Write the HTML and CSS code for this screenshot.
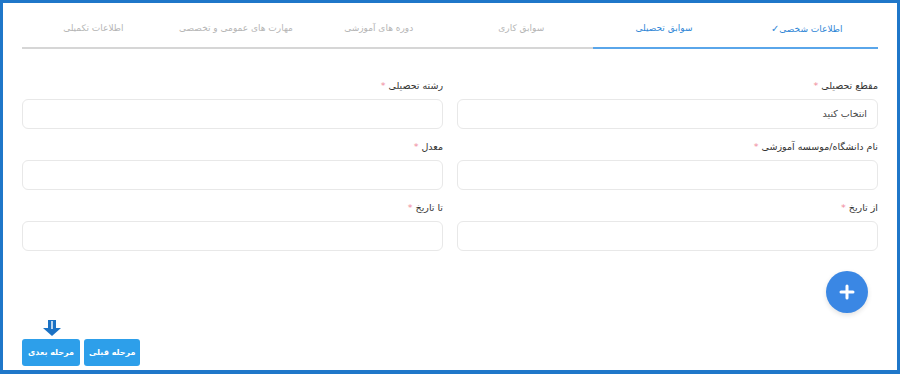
FILE: index.html
```html
<!DOCTYPE html>
<html lang="fa" dir="rtl">
<head>
    <meta charset="UTF-8">
    <title>سوابق تحصیلی</title>
    <link rel="stylesheet" href="styles.css">
</head>
<body>

    <div class="frame">
        <!-- مراحل فرم -->
        <ul class="steps">
            <li class="step done">اطلاعات شخصی<span class="check">✓</span></li>
            <li class="step active">سوابق تحصیلی</li>
            <li class="step">سوابق کاری</li>
            <li class="step">دوره های آموزشی</li>
            <li class="step">مهارت های عمومی و تخصصی</li>
            <li class="step">اطلاعات تکمیلی</li>
        </ul>

        <form class="fields">
            <div class="field">
                <label>مقطع تحصیلی <span class="req">*</span></label>
                <div class="input select">انتخاب کنید</div>
            </div>
            <div class="field">
                <label>رشته تحصیلی <span class="req">*</span></label>
                <div class="input"></div>
            </div>
            <div class="field">
                <label>نام دانشگاه/موسسه آموزشی <span class="req">*</span></label>
                <div class="input"></div>
            </div>
            <div class="field">
                <label>معدل <span class="req">*</span></label>
                <div class="input"></div>
            </div>
            <div class="field">
                <label>از تاریخ <span class="req">*</span></label>
                <div class="input"></div>
            </div>
            <div class="field">
                <label>تا تاریخ <span class="req">*</span></label>
                <div class="input"></div>
            </div>
        </form>

        <div class="add-row">
            <button type="button" class="add-btn" aria-label="افزودن">
                <svg width="16" height="16" viewBox="0 0 16 16">
                    <path d="M8 2v12M2 8h12" stroke="#fff" stroke-width="3" stroke-linecap="round"/>
                </svg>
            </button>
        </div>

        <div class="actions">
            <button type="button" class="btn">مرحله قبلی</button>
            <button type="button" class="btn next">
                مرحله بعدی
                <svg class="hint" width="20" height="16" viewBox="0 0 20 16">
                    <path d="M6 0h8v8h5l-9 8-9-8h5z" fill="#1b72c4"/>
                    <path d="M10 1v8" stroke="#fff" stroke-width="1.4"/>
                </svg>
            </button>
        </div>
    </div>

</body>
</html>
```

FILE: styles.css
```css
* {
    box-sizing: border-box;
}

body {
    margin: 0;
    font-family: 'DejaVu Sans', sans-serif;
    background-color: #ffffff;
}

.frame {
    width: 900px;
    height: 374px;
    border: 3px solid #1f77c9;
    border-bottom-width: 4px;
    padding: 0 19px 4px 19px;
    display: flex;
    flex-direction: column;
}

.steps {
    list-style: none;
    margin: 0;
    padding: 0;
    display: flex;
    height: 46px;
}

.step {
    flex: 1;
    text-align: center;
    font-size: 9px;
    color: #b5b5b5;
    padding-top: 20px;
    border-bottom: 2px solid #d6d6d6;
}

.step.done,
.step.active {
    color: #2f86d6;
    border-bottom-color: #5aa6ea;
}

.check {
    font-size: 10px;
    color: #2f86d6;
}

.fields {
    display: grid;
    grid-template-columns: 1fr 1fr;
    column-gap: 14px;
    row-gap: 11px;
    margin-top: 30px;
}

.field label {
    display: block;
    font-size: 9.5px;
    line-height: 14px;
    color: #333;
    margin-bottom: 6px;
}

.req {
    color: #f08a9c;
}

.input {
    height: 30px;
    border: 1px solid #e8e8e8;
    border-radius: 6px;
    background-color: #fff;
}

.select {
    font-size: 9.5px;
    color: #444;
    line-height: 28px;
    padding-right: 10px;
}

.add-row {
    display: flex;
    padding-right: 10px;
    margin-top: 20px;
}

.add-btn {
    width: 42px;
    height: 42px;
    border-radius: 50%;
    border: none;
    background-color: #3a87e4;
    box-shadow: 0 2px 5px rgba(0, 0, 0, 0.12);
    display: flex;
    align-items: center;
    justify-content: center;
    padding: 0;
}

.actions {
    margin-top: auto;
    display: flex;
    justify-content: flex-end;
    gap: 4px;
}

.btn {
    position: relative;
    height: 27px;
    padding: 0 5px;
    border: none;
    border-radius: 3px;
    background-color: #2d9fea;
    color: #fff;
    font-family: 'DejaVu Sans', sans-serif;
    font-size: 8px;
    font-weight: bold;
}

.btn.next {
    width: 58px;
}

.hint {
    position: absolute;
    top: -19px;
    left: 20px;
}
```
